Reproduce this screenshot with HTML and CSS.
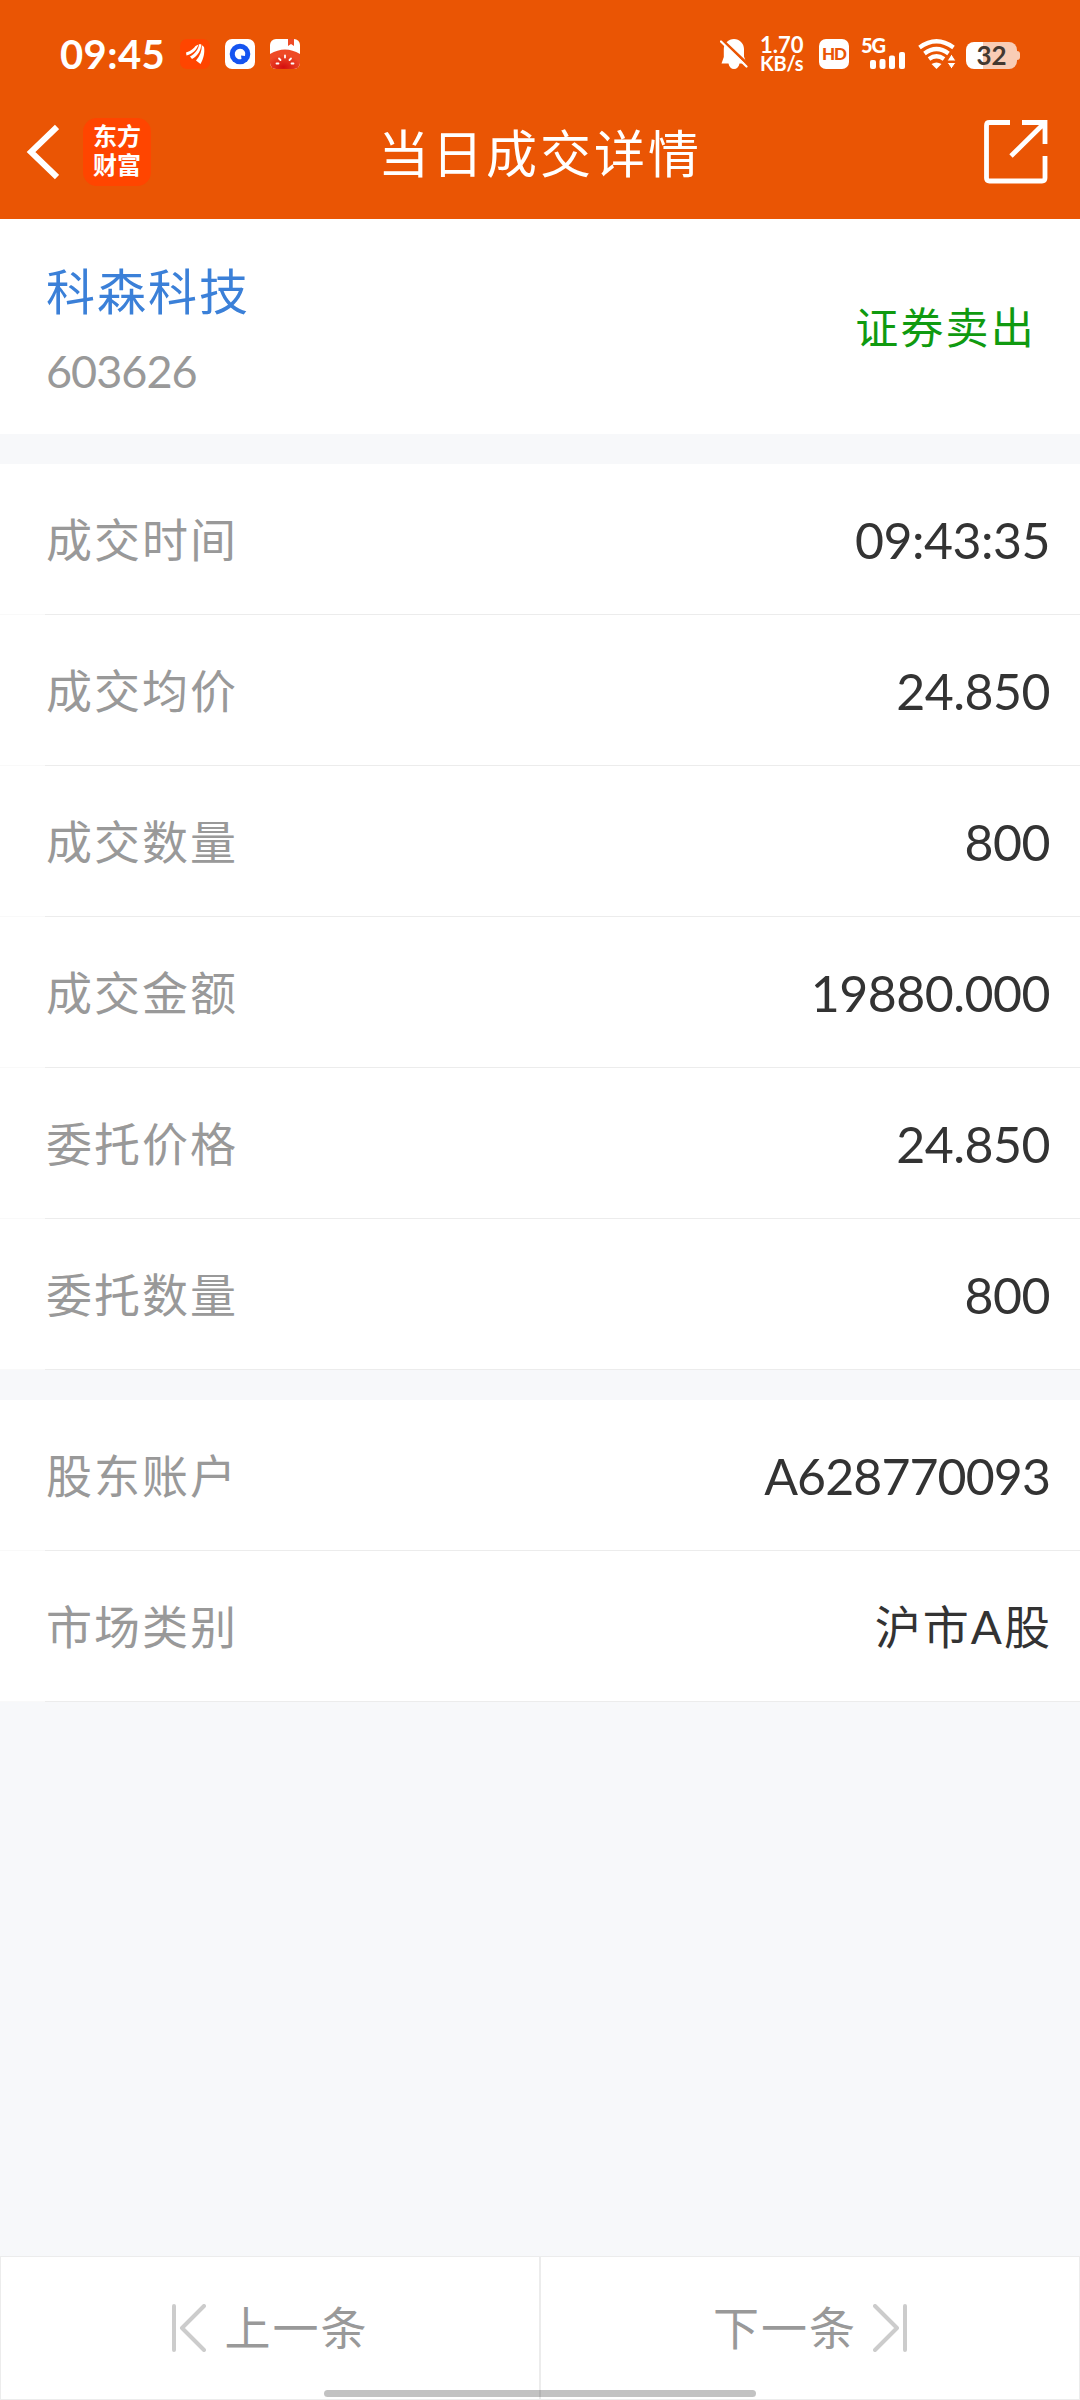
FILE: index.html
```html
<!DOCTYPE html>
<html lang="zh-CN">
<head>
    <meta charset="utf-8" />
    <title>当日成交详情</title>
    <meta name="viewport" content="width=1080" />
    <link rel="stylesheet" href="styles.css">
</head>
<body>
    <div class="screen">
        <header class="header">
            <div class="status">
                <span class="clock">09:45</span>
                <div class="notices">
                    <svg width="30" height="30" viewBox="0 0 30 30">
                        <rect width="30" height="30" rx="7" fill="#ff4500" />
                        <path d="M6 13.500C11 12 14 9 15.500 7L18.500 5.500C17 10.500 13 14.500 6.500 16.500ZM10 17.500C15 15 18.500 10.500 19 5.300L21.300 5.300C21 11.500 18 17 12 20ZM16 21.500C20 17 22 12 21.800 6L24 8C25 13.500 23.500 20 20.500 25Z" fill="#fff" />
                    </svg>
                    <svg width="30" height="30" viewBox="0 0 30 30">
                        <rect width="30" height="30" rx="7" fill="#fff" />
                        <circle cx="15" cy="15" r="10.300" fill="#1554f0" />
                        <path d="M15 9.700a5.300 5.300 0 1 0 1.500 10.400L16 16.500l4 .5A5.300 5.300 0 0 0 15 9.700Z" fill="#fff" />
                    </svg>
                    <svg width="30" height="30" viewBox="0 0 30 30">
                        <defs>
                            <clipPath id="tile"><rect width="30" height="30" rx="6" /></clipPath>
                            <radialGradient id="melon" cx=".45" cy=".9" r=".6">
                                <stop offset="0" stop-color="#d40f0f" />
                                <stop offset="1" stop-color="#ee4a26" />
                            </radialGradient>
                        </defs>
                        <g clip-path="url(#tile)">
                            <rect width="30" height="30" fill="#fff" />
                            <path d="M18 0h6v7l-3-2-3 2Z" fill="#ee4a26" />
                            <path d="M0 15Q15 6 30 15V30H0Z" fill="url(#melon)" />
                            <path d="M6.500 24.500h2M9 19.500l1.500 1.500M15 16.500v2M21 19.500l-1.500 1.500M23.500 24.500h-2" stroke="#fff" stroke-width="1.800" stroke-linecap="round" />
                        </g>
                    </svg>
                </div>
                <div class="indicators">
                    <svg class="bell" width="28" height="30" viewBox="0 0 28 30">
                        <path d="M14 0C19.500 0 24 4.500 24 10V17.500L26.500 24.500H19.500C19 28 16.800 30 14 30S9 28 8.500 24.500H1.500L3.800 18V10C3.800 4.500 8.500 0 14 0Z" fill="#fff" />
                        <path d="M1.500 .5L28.500 26" stroke="#ea5504" stroke-width="3" />
                        <path d="M1 2.500L26.500 27.500" stroke="#fff" stroke-width="2.200" stroke-linecap="round" />
                    </svg>
                    <div class="speed"><span>1.70</span><span class="speed-unit">KB/s</span></div>
                    <span class="hd">HD</span>
                    <div class="signal">
                        <span class="signal-type">5G</span>
                        <svg width="35" height="17" viewBox="0 0 35 17" fill="#fff">
                            <rect x="0" y="8" width="6" height="9" rx="2" />
                            <rect x="9.500" y="7" width="6" height="10" rx="2" />
                            <rect x="19" y="3.500" width="6" height="13.500" rx="2" />
                            <rect x="29" y="0" width="6" height="17" rx="2" />
                        </svg>
                    </div>
                    <svg class="wifi" width="38" height="30" viewBox="0 0 38 30">
                        <g fill="none" stroke="#fff" stroke-width="4.200">
                            <path d="M1.500 8.500Q18.500 -4 35.500 8.500" />
                            <path d="M6.500 14.500Q18.500 5.500 30.500 14.500" />
                            <path d="M11 20Q18.500 14.500 26 20" />
                        </g>
                        <path d="M13.500 25Q18.500 22 23.500 25L18.500 30Z" fill="#fff" />
                        <path d="M29 22l4.500-7 4.500 7ZM29 23.500h9l-4.500 6.500Z" fill="#fff" stroke="#ea5504" stroke-width="1" />
                    </svg>
                    <div class="battery"><span class="battery-level">32</span></div>
                </div>
            </div>
            <nav class="nav">
                <svg class="back" width="33" height="56" viewBox="0 0 33 56">
                    <path d="M31 3L5 28L31 53" fill="none" stroke="#fff" stroke-width="6" />
                </svg>
                <div class="logo"><span>东方</span><span>财富</span></div>
                <h1 class="title">当日成交详情</h1>
                <svg class="share" width="64" height="64" viewBox="0 0 64 64">
                    <path d="M26 2.500H5.500Q2.500 2.500 2.500 5.500V58Q2.500 61 5.500 61H58Q61 61 61 58V36M38 2.500H61V24M60 3.500L27 36" fill="none" stroke="#fff" stroke-width="4.800" />
                </svg>
            </nav>
        </header>

        <section class="stock">
            <div>
                <div class="stock-name">科森科技</div>
                <div class="stock-code">603626</div>
            </div>
            <div class="side">证券卖出</div>
        </section>

        <section class="rows">
            <div class="row"><span class="label">成交时间</span><span class="value">09:43:35</span></div>
            <div class="row"><span class="label">成交均价</span><span class="value">24.850</span></div>
            <div class="row"><span class="label">成交数量</span><span class="value">800</span></div>
            <div class="row"><span class="label">成交金额</span><span class="value">19880.000</span></div>
            <div class="row"><span class="label">委托价格</span><span class="value">24.850</span></div>
            <div class="row"><span class="label">委托数量</span><span class="value">800</span></div>
        </section>

        <section class="rows">
            <div class="row"><span class="label">股东账户</span><span class="value value-account">A628770093</span></div>
            <div class="row"><span class="label">市场类别</span><span class="value value-cjk">沪市A股</span></div>
        </section>

        <footer class="pager">
            <div class="page-button">
                <svg width="34" height="48" viewBox="0 0 34 48">
                    <path d="M2 2V46M32 2L10 24L32 46" />
                </svg>
                <span>上一条</span>
            </div>
            <div class="page-button page-next">
                <span>下一条</span>
                <svg width="34" height="48" viewBox="0 0 34 48">
                    <path d="M32 2V46M2 2L24 24L2 46" />
                </svg>
            </div>
            <div class="home-bar"></div>
        </footer>
    </div>
</body>
</html>
```
FILE: styles.css
```css
* {
    box-sizing: border-box;
}

body {
    margin: 0;
    font-family: 'Lato', 'Noto Sans CJK SC', sans-serif;
    color: #333;
    background: #f7f8fa;
}

svg {
    display: block;
    flex: none;
}

.screen {
    width: 1080px;
    height: 2400px;
    display: flex;
    flex-direction: column;
    overflow: hidden;
}

/* header */

.header {
    height: 219px;
    background: #ea5504;
    color: #fff;
}

.status {
    height: 84px;
    padding: 24px 60px 0 60px;
    display: flex;
    align-items: center;
}

.clock {
    width: 120px;
    font-size: 40px;
    font-weight: 700;
    line-height: 60px;
    letter-spacing: 0.4px;
}

.notices {
    display: flex;
    gap: 15px;
}

.indicators {
    margin-left: auto;
    display: flex;
    align-items: center;
}

.speed {
    width: 45px;
    margin-left: 12px;
    display: flex;
    flex-direction: column;
    font-size: 22px;
    font-weight: 700;
    line-height: 19px;
    white-space: nowrap;
}

.speed-unit {
    font-size: 20px;
    letter-spacing: -0.2px;
}

.hd {
    width: 30px;
    height: 30px;
    margin-left: 14px;
    border-radius: 7px;
    background: #fff;
    color: #ea5504;
    font-size: 17px;
    font-weight: 900;
    line-height: 30px;
    letter-spacing: -1px;
    text-align: center;
}

.signal {
    width: 44px;
    height: 30px;
    margin-left: 12px;
    display: flex;
    flex-direction: column;
    align-items: flex-end;
}

.signal-type {
    align-self: flex-start;
    font-size: 20px;
    font-weight: 900;
    line-height: 13px;
    letter-spacing: -1px;
}

.wifi {
    margin-left: 13px;
}

.battery {
    width: 51px;
    height: 27px;
    margin: 2px 3px 0 10px;
    position: relative;
    border-radius: 8px;
    background: linear-gradient(90deg, #fff 17px, #f9ccb5 17px);
    color: #443830;
    font-size: 26px;
    font-weight: 700;
    line-height: 27px;
    text-align: center;
}

.battery::after {
    content: '';
    position: absolute;
    left: 51px;
    top: 9px;
    width: 3px;
    height: 9px;
    border-radius: 0 3px 3px 0;
    background: #f9ccb5;
}

.nav {
    height: 135px;
    padding: 0 32px 0 26px;
    display: flex;
    align-items: center;
}

.logo {
    width: 68px;
    height: 68px;
    margin-left: 24px;
    padding-top: 3px;
    display: flex;
    flex-direction: column;
    align-items: center;
    border-radius: 14px;
    background: #ff4500;
    font-size: 24px;
    font-weight: 700;
    line-height: 29px;
}

.title {
    flex: 1;
    margin: 0 57px 0 0;
    padding: 4px 0 0 2px;
    font-size: 51px;
    font-weight: 400;
    line-height: 70px;
    letter-spacing: 3px;
    text-align: center;
}

/* stock summary */

.stock {
    height: 215px;
    padding: 0 44px 0 46px;
    display: flex;
    align-items: center;
    justify-content: space-between;
    background: #fff;
}

.stock-name {
    padding-top: 8px;
    color: #3b80d8;
    font-size: 49px;
    line-height: 80px;
    letter-spacing: 2px;
}

.stock-code {
    color: #999;
    font-size: 45px;
    line-height: 80px;
    letter-spacing: -1px;
}

.side {
    padding-top: 2px;
    color: #109a10;
    font-size: 43px;
    line-height: 60px;
    letter-spacing: 2.200px;
}

/* detail rows */

.rows {
    margin-top: 30px;
}

.row {
    height: 151px;
    padding: 0 30px 0 46px;
    display: flex;
    align-items: center;
    justify-content: space-between;
    background: linear-gradient(90deg, #f9f9f9 45px, #ececec 45px) bottom / 100% 1px no-repeat #fff;
}

.label {
    color: #999;
    font-size: 46px;
    line-height: 70px;
    letter-spacing: 2px;
}

.value {
    font-size: 50px;
    line-height: 70px;
    letter-spacing: -0.5px;
}

.value-account {
    letter-spacing: -0.9px;
}

.value-cjk {
    margin-right: -2px;
    font-size: 46px;
    letter-spacing: 2px;
}

/* bottom pager */

.pager {
    height: 144px;
    margin-top: auto;
    position: relative;
    display: flex;
}

.page-button {
    flex: 1;
    display: flex;
    align-items: center;
    justify-content: center;
    gap: 19px;
    border: 1px solid #ececec;
    background: #fff;
    color: #999;
    font-size: 46px;
    line-height: 70px;
    letter-spacing: 2px;
}

.page-next {
    gap: 16px;
}

.page-button svg {
    fill: none;
    stroke: #ccc;
    stroke-width: 4;
    stroke-linecap: round;
    stroke-linejoin: round;
}

.home-bar {
    position: absolute;
    left: 324px;
    bottom: 3px;
    width: 432px;
    height: 7px;
    border-radius: 4px;
    background: rgba(0, 0, 0, 0.24);
}
```
